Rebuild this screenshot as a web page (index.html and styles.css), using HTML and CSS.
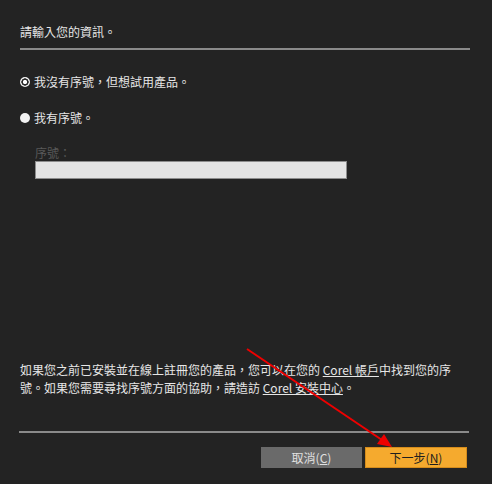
FILE: index.html
```html
<!DOCTYPE html>
<html lang="zh-Hant">
<head>
    <meta charset="UTF-8">
    <title>安裝</title>
    <link rel="stylesheet" href="styles.css">
</head>
<body>
    <div class="dialog">
        <div class="title">請輸入您的資訊。</div>
        <div class="divider"></div>

        <div class="option first">
            <span class="radio checked"></span>
            <span>我沒有序號，但想試用產品。</span>
        </div>
        <div class="option">
            <span class="radio"></span>
            <span>我有序號。</span>
        </div>

        <div class="serial">
            <label for="serialNumber">序號：</label>
            <input type="text" id="serialNumber" name="serialNumber" disabled>
        </div>

        <p class="info">如果您之前已安裝並在線上註冊您的產品，您可以在您的 <a href="#">Corel 帳戶</a>中找到您的序號。如果您需要尋找序號方面的協助，請造訪 <a href="#">Corel 安裝中心</a>。</p>

        <div class="divider bottom"></div>

        <div class="button-row">
            <button class="action-button cancel-button">取消(<u>C</u>)</button>
            <button class="action-button next-button">下一步(<u>N</u>)</button>
        </div>
    </div>

    <!-- annotation arrow drawn over the dialog -->
    <svg class="arrow" width="492" height="484" viewBox="0 0 492 484">
        <line x1="247" y1="349" x2="382" y2="440" stroke="#ee0000" stroke-width="2"/>
        <polygon points="392,447 377,444 384,434" fill="#ee0000"/>
    </svg>
</body>
</html>
```

FILE: styles.css
```css
/* dark installer dialog */
body {
    margin: 0;
    padding: 0;
    width: 492px;
    height: 484px;
    background-color: #232323;
    color: #e6e6e6;
    font-family: "Noto Sans CJK TC", "Noto Sans", sans-serif;
    font-size: 12px;
    position: relative;
    overflow: hidden;
}

.dialog {
    display: flex;
    flex-direction: column;
    padding: 24px 22px 0 20px;
}

.title {
    line-height: 16px;
}

.divider {
    margin-top: 8px;
    border-top: 2px solid #8a8a8a;
}

.divider.bottom {
    margin-top: 34px;
    margin-left: -1px;
    margin-right: 1px;
}

.option {
    display: flex;
    align-items: center;
    gap: 4px;
    line-height: 16px;
    margin-top: 20px;
}

.option.first {
    margin-top: 24px;
}

.radio {
    width: 10px;
    height: 10px;
    border-radius: 50%;
    background-color: #f2f2f2;
}

.radio.checked {
    background: radial-gradient(circle, #ffffff 0 1.8px, #2a2a2a 2.4px 3.4px, #f2f2f2 3.9px);
}

.serial {
    display: flex;
    flex-direction: column;
    margin-top: 19px;
    padding-left: 15px;
}

.serial label {
    color: #595959;
    line-height: 16px;
}

.serial input {
    box-sizing: border-box;
    width: 312px;
    height: 18px;
    margin: 0;
    border: 1px solid #8c8c8c;
    background-color: #e3e3e3;
}

.info {
    margin: 182px 0 0 0;
    line-height: 18px;
    padding-right: 4px;
}

.info a {
    color: #e6e6e6;
    text-decoration: underline;
}

.button-row {
    display: flex;
    justify-content: flex-end;
    gap: 3px;
    margin-top: 14px;
    margin-right: 3px;
}

.action-button {
    box-sizing: border-box;
    height: 21px;
    padding: 0;
    border: none;
    font-family: inherit;
    font-size: 12px;
}

.cancel-button {
    width: 101px;
    background-color: #6a6a6a;
    color: #e0e0e0;
}

.next-button {
    width: 102px;
    background-color: #f5aa2e;
    border: 1px solid #d58c1c;
    color: #1e1e1e;
}

.arrow {
    position: absolute;
    left: 0;
    top: 0;
    pointer-events: none;
}
```
